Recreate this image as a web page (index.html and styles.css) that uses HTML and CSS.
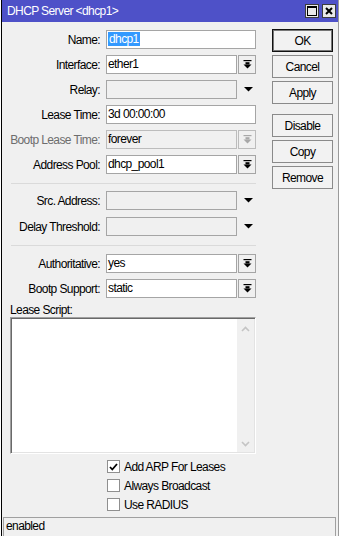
FILE: index.html
```html
<!DOCTYPE html>
<html>
<head>
<meta charset="utf-8">
<link rel="stylesheet" href="styles.css">
</head>
<body>
<div class="screen">
  <div class="window">
    <div class="titlebar">
      <span class="title">DHCP Server &lt;dhcp1&gt;</span>
      <div class="tbtns">
        <span class="tbtn"><svg width="10" height="10" viewBox="0 0 10 10"><rect x="0.5" y="0.5" width="9" height="9" fill="none" stroke="#000"/><rect x="0" y="0" width="10" height="2" fill="#000"/></svg></span>
        <span class="tbtn"><svg width="8" height="8" viewBox="0 0 8 8"><path d="M1 1 L7 7 M7 1 L1 7" stroke="#000" stroke-width="2"/></svg></span>
      </div>
    </div>
    <div class="content">
      <div class="top">
        <div class="form">
          <div class="row"><span class="label">Name:</span><div class="ctrl"><div class="field"><span class="sel">dhcp1</span></div></div></div>
          <div class="row"><span class="label">Interface:</span><div class="ctrl"><div class="field">ether1</div><span class="dd"><svg width="9" height="9" viewBox="0 0 9 9"><rect x="0.5" y="0" width="8" height="1.2"/><rect x="2.5" y="2.2" width="4" height="2.3"/><polygon points="0.5,4.5 8.5,4.5 4.5,8.5"/></svg></span></div></div>
          <div class="row"><span class="label">Relay:</span><div class="ctrl"><div class="field gray"></div><span class="tri"><svg width="9" height="5" viewBox="0 0 9 5"><polygon points="0,0 9,0 4.5,4.5"/></svg></span></div></div>
          <div class="row"><span class="label">Lease Time:</span><div class="ctrl"><div class="field">3d 00:00:00</div></div></div>
          <div class="row"><span class="label dis">Bootp Lease Time:</span><div class="ctrl"><div class="field disf">forever</div><span class="dd disd"><svg width="9" height="9" viewBox="0 0 9 9"><rect x="0.5" y="0" width="8" height="1.2"/><rect x="2.5" y="2.2" width="4" height="2.3"/><polygon points="0.5,4.5 8.5,4.5 4.5,8.5"/></svg></span></div></div>
          <div class="row"><span class="label">Address Pool:</span><div class="ctrl"><div class="field">dhcp_pool1</div><span class="dd"><svg width="9" height="9" viewBox="0 0 9 9"><rect x="0.5" y="0" width="8" height="1.2"/><rect x="2.5" y="2.2" width="4" height="2.3"/><polygon points="0.5,4.5 8.5,4.5 4.5,8.5"/></svg></span></div></div>
          <div class="sep"></div>
          <div class="row wide"><span class="label">Src. Address:</span><div class="ctrl"><div class="field gray"></div><span class="tri"><svg width="9" height="5" viewBox="0 0 9 5"><polygon points="0,0 9,0 4.5,4.5"/></svg></span></div></div>
          <div class="row"><span class="label">Delay Threshold:</span><div class="ctrl"><div class="field gray"></div><span class="tri"><svg width="9" height="5" viewBox="0 0 9 5"><polygon points="0,0 9,0 4.5,4.5"/></svg></span></div></div>
          <div class="sep sep2"></div>
          <div class="row"><span class="label">Authoritative:</span><div class="ctrl"><div class="field">yes</div><span class="dd"><svg width="9" height="9" viewBox="0 0 9 9"><rect x="0.5" y="0" width="8" height="1.2"/><rect x="2.5" y="2.2" width="4" height="2.3"/><polygon points="0.5,4.5 8.5,4.5 4.5,8.5"/></svg></span></div></div>
          <div class="row"><span class="label">Bootp Support:</span><div class="ctrl"><div class="field">static</div><span class="dd"><svg width="9" height="9" viewBox="0 0 9 9"><rect x="0.5" y="0" width="8" height="1.2"/><rect x="2.5" y="2.2" width="4" height="2.3"/><polygon points="0.5,4.5 8.5,4.5 4.5,8.5"/></svg></span></div></div>
        </div>
        <div class="buttons">
          <div class="btn ok">OK</div>
          <div class="btn">Cancel</div>
          <div class="btn">Apply</div>
          <div class="btn gap">Disable</div>
          <div class="btn">Copy</div>
          <div class="btn">Remove</div>
        </div>
      </div>
      <div class="script-label">Lease Script:</div>
      <div class="ta">
        <div class="scroll">
          <svg width="9" height="6" viewBox="0 0 9 6"><polyline points="1,5 4.5,1.5 8,5" fill="none" stroke="#c4c4c4" stroke-width="1.6"/></svg>
          <svg width="9" height="6" viewBox="0 0 9 6"><polyline points="1,1 4.5,4.5 8,1" fill="none" stroke="#c4c4c4" stroke-width="1.6"/></svg>
        </div>
      </div>
      <div class="checks">
        <div class="chk"><span class="box"><svg width="9" height="8" viewBox="0 0 9 8"><polyline points="1,4 3.3,6.5 8,1" fill="none" stroke="#000" stroke-width="1.8"/></svg></span><span>Add ARP For Leases</span></div>
        <div class="chk"><span class="box"></span><span>Always Broadcast</span></div>
        <div class="chk"><span class="box"></span><span>Use RADIUS</span></div>
      </div>
    </div>
    <div class="status">enabled</div>
  </div>
</div>
</body>
</html>
```

FILE: styles.css
```css
* { box-sizing: border-box; }
html, body { margin: 0; padding: 0; background: #fff; }
body {
  font-family: "Liberation Sans", Arial, sans-serif;
  font-size: 12px;
  letter-spacing: -0.6px;
  color: #000;
}
.screen { width: 340px; height: 536px; padding-left: 1px; overflow: hidden; }
.window {
  width: 338px;
  height: 536px;
  border-left: 1px solid #000;
  border-right: 1px solid #9a9a9a;
  background: #f0f0f0;
  display: flex;
  flex-direction: column;
}
.titlebar {
  height: 22px;
  flex: none;
  background: #4e51c8;
  color: #fff;
  display: flex;
  align-items: center;
  justify-content: space-between;
  padding: 0 2px 0 5px;
}
.title { font-size: 12px; }
.tbtns { display: flex; gap: 3px; }
.tbtn {
  width: 14px; height: 14px;
  border: 1px solid #3c3c3c;
  background: #e9e9e9;
  display: flex; align-items: center; justify-content: center;
}
.content { flex: 1; padding: 7px 0 0 8px; }
.top { display: flex; align-items: flex-start; }
.form { width: 246px; margin-top: 1px; }
.row { display: flex; height: 19px; align-items: center; margin-bottom: 6px; }
.row.wide { margin-bottom: 7px; }
.label { width: 90px; margin-right: 6px; text-align: right; white-space: nowrap; }
.label.dis { color: #6d6d6d; }
.ctrl { width: 150px; height: 19px; display: flex; }
.field {
  flex: 1;
  height: 19px;
  border: 1px solid #a5a5a5;
  background: #fff;
  padding-left: 1px;
  line-height: 17px;
  white-space: nowrap;
  overflow: hidden;
}
.field.gray { background: #f0f0f0; }
.field.disf { background: #f0f0f0; border-color: #bcbcbc; }
.sel { background: #3399ff; color: #fff; padding: 0 1px; display: inline-block; line-height: 14px; }
.dd {
  width: 18px; height: 19px; margin-left: 1px; flex: none;
  border: 1px solid #a5a5a5;
  background: #f0f0f0;
  display: flex; align-items: center; justify-content: center;
}
.dd svg { fill: #000; }
.dd.disd { border-color: #bcbcbc; }
.dd.disd svg { fill: #a8a8a8; }
.tri { width: 19px; flex: none; display: flex; align-items: center; justify-content: center; padding-left: 3px; }
.sep { height: 1px; background: #dadada; margin: 9px 0 7px 1px; }
.sep2 { margin-top: 9px; margin-bottom: 8px; }
.buttons { width: 61px; margin-left: 16px; }
.btn {
  height: 23px;
  border: 1px solid #8a8a8a;
  background: #f2f2f2;
  display: flex; align-items: center; justify-content: center;
  margin-bottom: 3px;
}
.btn.ok { border-color: #111; box-shadow: inset 0 0 0 1px #777; }
.btn.gap { margin-top: 10px; }
.script-label { line-height: 13px; height: 13px; }
.ta {
  width: 246px; height: 137px;
  border: 1px solid;
  border-color: #a0a0a0 #fff #fff #a0a0a0;
  box-shadow: inset 1px 1px 0 #696969, inset -1px -1px 0 #e3e3e3;
  background: #fff;
  display: flex; justify-content: flex-end;
  padding: 1px 1px 1px 0;
}
.scroll {
  width: 17px; height: 100%;
  background: #f0f0f0;
  display: flex; flex-direction: column; justify-content: space-between; align-items: center;
  padding: 7px 0 5px;
}
.checks { margin-top: 6px; padding-left: 97px; }
.chk { display: flex; align-items: center; height: 13px; margin-bottom: 6px; }
.box {
  width: 13px; height: 13px; margin-right: 4px;
  border: 1px solid #8f8f8f;
  background: #fff;
  display: flex; align-items: center; justify-content: center;
}
.status {
  height: 19px; flex: none;
  margin: 0 2px 0 1px;
  border: 1px solid #a0a0a0;
  border-bottom: none;
  padding-left: 2px;
  line-height: 17px;
}
```
